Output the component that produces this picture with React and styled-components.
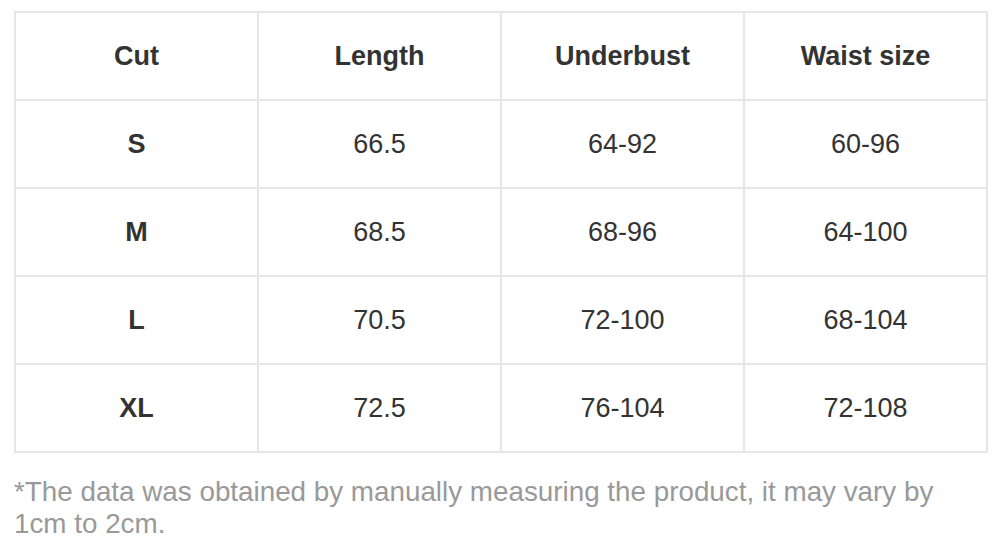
import styled, { createGlobalStyle } from "styled-components";

const GlobalStyle = createGlobalStyle`
  body {
    margin: 0;
    background: #fff;
    font-family: "Liberation Sans", Arial, sans-serif;
  }
`;

const rows = [
  { cut: "S", length: "66.5", underbust: "64-92", waist: "60-96" },
  { cut: "M", length: "68.5", underbust: "68-96", waist: "64-100" },
  { cut: "L", length: "70.5", underbust: "72-100", waist: "68-104" },
  { cut: "XL", length: "72.5", underbust: "76-104", waist: "72-108" },
];

const Page = () => {
  return (
    <Wrapper>
      <GlobalStyle />
      <SizeTable>
        <thead>
          <tr>
            <HeadCell>Cut</HeadCell>
            <HeadCell>Length</HeadCell>
            <HeadCell>Underbust</HeadCell>
            <HeadCell>Waist size</HeadCell>
          </tr>
        </thead>
        <tbody>
          {rows.map((r) => (
            <tr key={r.cut}>
              <Cell bold>{r.cut}</Cell>
              <Cell>{r.length}</Cell>
              <Cell>{r.underbust}</Cell>
              <Cell>{r.waist}</Cell>
            </tr>
          ))}
        </tbody>
      </SizeTable>
      <Note>
        *The data was obtained by manually measuring the product, it may vary by
        1cm to 2cm.
      </Note>
    </Wrapper>
  );
};

const Wrapper = styled.div`
  padding: 11px 12px 0 14px;
`;

const SizeTable = styled.table`
  width: 974px;
  border-collapse: collapse;
  table-layout: fixed;
  color: #333;
  font-size: 27px;
`;

const HeadCell = styled.th`
  height: 86px;
  padding: 0;
  border: 2px solid #e6e6e6;
  font-weight: 700;
  text-align: center;
  vertical-align: middle;
`;

const Cell = styled.td`
  height: 86px;
  padding: 0;
  border: 2px solid #e6e6e6;
  font-weight: ${({ bold }) => (bold ? 700 : 400)};
  text-align: center;
  vertical-align: middle;
`;

const Note = styled.p`
  margin: 23px 0 0;
  max-width: 950px;
  font-size: 27.8px;
  line-height: 32px;
  color: #999;
`;

export default function App() {
  return <Page />;
}
